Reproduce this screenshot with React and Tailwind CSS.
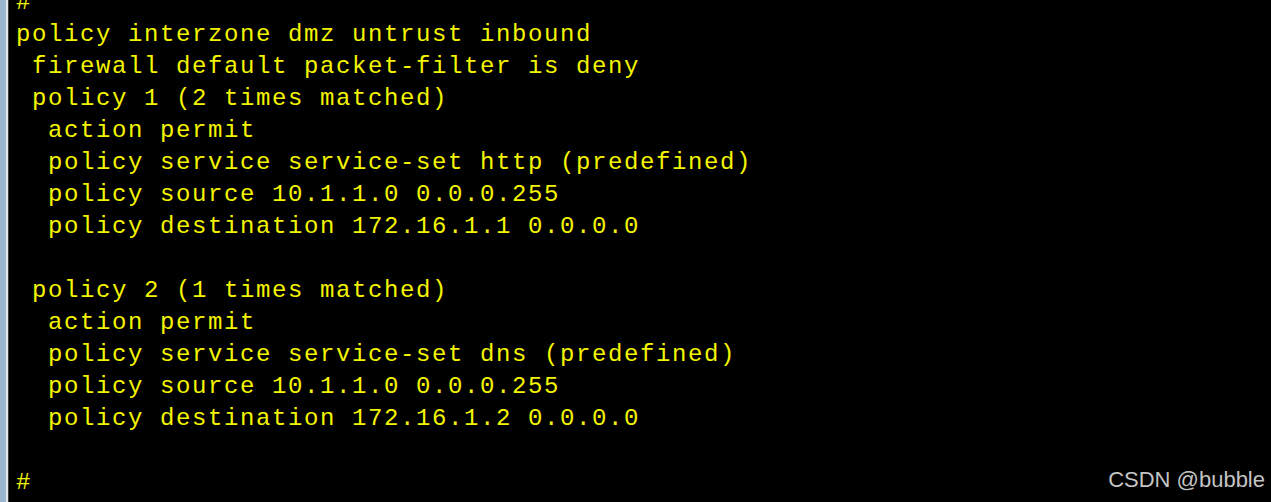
import React from "react";

const lines = [
  "#",
  "policy interzone dmz untrust inbound",
  " firewall default packet-filter is deny",
  " policy 1 (2 times matched)",
  "  action permit",
  "  policy service service-set http (predefined)",
  "  policy source 10.1.1.0 0.0.0.255",
  "  policy destination 172.16.1.1 0.0.0.0",
  "",
  " policy 2 (1 times matched)",
  "  action permit",
  "  policy service service-set dns (predefined)",
  "  policy source 10.1.1.0 0.0.0.255",
  "  policy destination 172.16.1.2 0.0.0.0",
  "",
  "#",
];

export default function App() {
  return (
    <div className="relative flex h-[502px] w-[1271px] overflow-hidden bg-black">
      <div className="w-[6px] shrink-0 bg-[#9cb6cf]" />
      <div className="w-[2px] shrink-0 bg-[#e4e8ec]" />
      <div className="w-[1px] shrink-0 bg-[#3a3a3a]" />
      <div className="flex-1 pl-[7px]">
        <div className="mt-[-13px] font-['Liberation_Mono',monospace] text-[24px] leading-[32px] tracking-[1.6px] text-[#f4f400]">
          {lines.map((l, i) => (
            <div key={i} className="h-[32px] whitespace-pre">
              {l}
            </div>
          ))}
        </div>
      </div>
      <div className="absolute bottom-[9px] right-[6px] font-['Liberation_Sans',Arial,sans-serif] text-[22px] leading-[26px] text-[#c4c4c4]">
        CSDN @bubble
      </div>
    </div>
  );
}
